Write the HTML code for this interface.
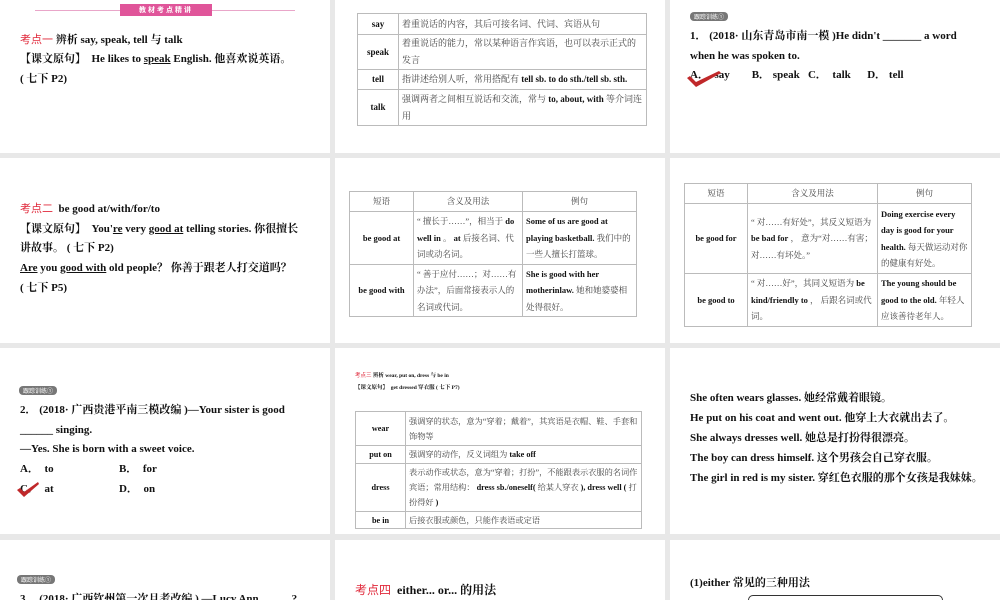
<!DOCTYPE html>
<html><head><meta charset="utf-8"><style>
*{margin:0;padding:0;box-sizing:border-box}
body{width:1000px;height:600px;background:#e8e8e8;position:relative;overflow:hidden;font-family:"Liberation Serif","Noto Serif CJK SC",serif;font-weight:bold;color:#111}
.p{position:absolute;background:#fff;overflow:hidden}
.t{position:absolute;white-space:nowrap;font-size:11px;line-height:14px}
.r{color:#e0283a;font-weight:normal;font-family:"Liberation Sans","Noto Sans CJK SC",sans-serif}
u{text-decoration:underline}
table{position:absolute;border-collapse:collapse;font-size:8px;line-height:15px;border:1px solid #888}
td{border:1px solid #bbb;padding:0 3px;vertical-align:middle}
td.h{text-align:center;font-weight:bold}
.n{font-weight:normal;color:#444}
.b{position:absolute;background:#777;color:#fff;font-size:6px;line-height:9px;padding:0 4px;border-radius:4px;font-weight:normal;font-family:"Noto Sans CJK SC",sans-serif}
.ck{position:absolute}
</style></head><body>
<!-- row1 -->
<div class="p" style="left:0;top:0;width:330px;height:153px">
 <div style="position:absolute;left:35px;top:10px;width:260px;height:1px;background:#e9a6c9"></div>
 <div style="position:absolute;left:120px;top:4px;width:92px;height:12px;background:#e0559a;color:#fff;font-size:7px;line-height:12px;text-align:center;letter-spacing:2px;font-family:'Noto Sans CJK SC',sans-serif">教材考点精讲</div>
 <div class="t" style="left:20px;top:33px"><span class="r">考点一</span> 辨析 say, speak, tell 与 talk</div>
 <div class="t" style="left:20px;top:52px">【课文原句】 &nbsp;He likes to <u>speak</u> English. 他喜欢说英语。</div>
 <div class="t" style="left:20px;top:72px">( 七下 P2)</div>
</div>
<div class="p" style="left:335px;top:0;width:330px;height:153px">
 <table style="left:22px;top:13px;width:290px;font-size:9px;line-height:17px">
  <tr style="height:21px"><td class="h" style="width:41px">say</td><td class="n">着重说话的内容，其后可接名词、代词、宾语从句</td></tr>
  <tr style="height:35px"><td class="h">speak</td><td class="n">着重说话的能力，常以某种语言作宾语，也可以表示正式的发言</td></tr>
  <tr style="height:20px"><td class="h">tell</td><td class="n">指讲述给别人听，常用搭配有 <b style="color:#111">tell sb. to do sth./tell sb. sth.</b></td></tr>
  <tr style="height:36px"><td class="h">talk</td><td class="n">强调两者之间相互说话和交流，常与 <b style="color:#111">to, about, with</b> 等介词连用</td></tr>
 </table>
</div>
<div class="p" style="left:670px;top:0;width:330px;height:153px">
 <div class="b" style="left:20px;top:12px">跟踪训练①</div>
 <div class="t" style="left:20px;top:29px">1． (2018· 山东青岛市南一模 )He didn't _______ a word</div>
 <div class="t" style="left:20px;top:49px">when he was spoken to.</div>
 <div class="t" style="left:20px;top:68px">A． &nbsp;say &nbsp; &nbsp; &nbsp; &nbsp;B． speak &nbsp; C． &nbsp;talk &nbsp; &nbsp; &nbsp;D． tell</div>
 <svg class="ck" style="left:16px;top:70px" width="36" height="18"><path d="M1 8 L4 6 L10 12 L33 1 L35 3 L10 17 Z" fill="#c0282a"/></svg>
</div>
<!-- row2 -->
<div class="p" style="left:0;top:158px;width:330px;height:185px">
 <div class="t" style="left:20px;top:44px"><span class="r">考点二</span> &nbsp;be good at/with/for/to</div>
 <div class="t" style="left:20px;top:64px">【课文原句】 &nbsp;You'<u>re</u> very <u>good at</u> telling stories. 你很擅长</div>
 <div class="t" style="left:20px;top:83px">讲故事。 ( 七下 P2)</div>
 <div class="t" style="left:20px;top:103px"><u>Are</u> you <u>good with</u> old people？ 你善于跟老人打交道吗？</div>
 <div class="t" style="left:20px;top:123px">( 七下 P5)</div>
</div>
<div class="p" style="left:335px;top:158px;width:330px;height:185px">
 <table style="left:14px;top:33px;width:288px;font-size:8.5px;line-height:16.5px">
  <tr style="height:20px" class="n"><td style="text-align:center;width:64px">短语</td><td style="text-align:center;width:109px">含义及用法</td><td style="text-align:center">例句</td></tr>
  <tr style="height:53px"><td class="h">be good at</td><td class="n">“ 擅长于……”，相当于 <b style="color:#111">do well in</b> 。 <b style="color:#111">at</b> 后接名词、代词或动名词。</td><td><b>Some of us are good at playing basketball.</b> <span class="n">我们中的一些人擅长打篮球。</span></td></tr>
  <tr style="height:52px"><td class="h">be good with</td><td class="n">“ 善于应付……；对……有办法”，后面常接表示人的名词或代词。</td><td><b>She is good with her motherinlaw.</b> <span class="n">她和她婆婆相处得很好。</span></td></tr>
 </table>
</div>
<div class="p" style="left:670px;top:158px;width:330px;height:185px">
 <table style="left:14px;top:25px;width:288px;font-size:8.5px;line-height:16.5px">
  <tr style="height:20px" class="n"><td style="text-align:center;width:63px">短语</td><td style="text-align:center;width:130px">含义及用法</td><td style="text-align:center">例句</td></tr>
  <tr style="height:70px"><td class="h">be good for</td><td class="n">“ 对……有好处”，其反义短语为 <b style="color:#111">be bad for</b> ， 意为“对……有害；对……有坏处。”</td><td><b>Doing exercise every day is good for your health.</b> <span class="n">每天做运动对你的健康有好处。</span></td></tr>
  <tr style="height:53px"><td class="h">be good to</td><td class="n">“ 对……好”，其同义短语为 <b style="color:#111">be kind/friendly to</b> ， 后跟名词或代词。</td><td><b>The young should be good to the old.</b> <span class="n">年轻人应该善待老年人。</span></td></tr>
 </table>
</div>
<!-- row3 -->
<div class="p" style="left:0;top:348px;width:330px;height:186px">
 <div class="b" style="left:19px;top:38px">跟踪训练①</div>
 <div class="t" style="left:20px;top:55px">2． (2018· 广西贵港平南三模改编 )—Your sister is good</div>
 <div class="t" style="left:20px;top:75px"> ______ singing.</div>
 <div class="t" style="left:20px;top:94px">—Yes. She is born with a sweet voice.</div>
 <div class="t" style="left:20px;top:114px">A． &nbsp;to</div>
 <div class="t" style="left:119px;top:114px">B． &nbsp;for</div>
 <div class="t" style="left:20px;top:134px">C． &nbsp;at</div>
 <div class="t" style="left:119px;top:134px">D． &nbsp;on</div>
 <svg class="ck" style="left:16px;top:133px" width="24" height="18"><path d="M1 9 L4 7 L8 11 L22 1 L23 3 L8 16 Z" fill="#c0282a"/></svg>
</div>
<div class="p" style="left:335px;top:348px;width:330px;height:186px">
 <div class="t" style="left:20px;top:24px;font-size:5.5px;line-height:8px"><span class="r">考点三</span> 辨析 wear, put on, dress 与 be in</div>
 <div class="t" style="left:20px;top:36px;font-size:5.5px;line-height:8px">【课文原句】 &nbsp;get dressed 穿衣服 ( 七下 P7)</div>
 <table style="left:20px;top:63px;width:287px;font-size:8.2px;line-height:15px">
  <tr style="height:34px"><td class="h" style="width:50px">wear</td><td class="n">强调穿的状态，意为“穿着；戴着”，其宾语是衣帽、鞋、手套和饰物等</td></tr>
  <tr style="height:18px"><td class="h">put on</td><td class="n">强调穿的动作，反义词组为 <b style="color:#111">take off</b></td></tr>
  <tr style="height:48px"><td class="h">dress</td><td class="n">表示动作或状态，意为“穿着；打扮”，不能跟表示衣服的名词作宾语；常用结构： <b style="color:#111">dress sb./oneself(</b> 给某人穿衣 <b style="color:#111">), dress well (</b> 打扮得好 <b style="color:#111">)</b></td></tr>
  <tr style="height:17px"><td class="h">be in</td><td class="n">后接衣服或颜色，只能作表语或定语</td></tr>
 </table>
</div>
<div class="p" style="left:670px;top:348px;width:330px;height:186px">
 <div class="t" style="left:20px;top:43px">She often wears glasses. 她经常戴着眼镜。</div>
 <div class="t" style="left:20px;top:63px">He put on his coat and went out. 他穿上大衣就出去了。</div>
 <div class="t" style="left:20px;top:83px">She always dresses well. 她总是打扮得很漂亮。</div>
 <div class="t" style="left:20px;top:103px">The boy can dress himself. 这个男孩会自己穿衣服。</div>
 <div class="t" style="left:20px;top:123px">The girl in red is my sister. 穿红色衣服的那个女孩是我妹妹。</div>
</div>
<!-- row4 -->
<div class="p" style="left:0;top:540px;width:330px;height:60px">
 <div class="b" style="left:17px;top:35px">跟踪训练①</div>
 <div class="t" style="left:20px;top:52px">3． (2018· 广西钦州第一次月考改编 ) —Lucy Ann _____ ?</div>
</div>
<div class="p" style="left:335px;top:540px;width:330px;height:60px">
 <div class="t" style="left:20px;top:43px;font-size:12px"><span class="r">考点四</span> &nbsp;either... or... 的用法</div>
</div>
<div class="p" style="left:670px;top:540px;width:330px;height:60px">
 <div class="t" style="left:20px;top:36px">(1)either 常见的三种用法</div>
 <div style="position:absolute;left:78px;top:55px;width:195px;height:20px;border:1px solid #333;border-radius:5px"></div>
</div>
</body></html>
